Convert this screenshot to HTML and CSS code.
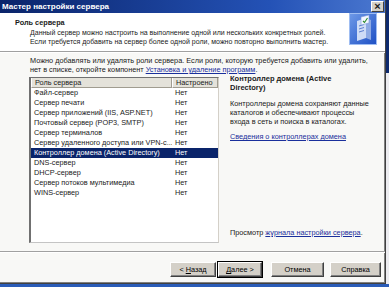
FILE: index.html
```html
<!DOCTYPE html>
<html lang="ru">
<head>
  <meta charset="UTF-8">
  <title>Мастер настройки сервера</title>
  <link rel="stylesheet" href="styles.css">
</head>
<body>
  <div class="window">
    <div class="titlebar">
      <span class="title">Мастер настройки сервера</span>
      <span class="close">×</span>
    </div>

    <!-- Wizard page header -->
    <div class="header">
      <div class="header-text">
        <p class="header-title">Роль сервера</p>
        <p class="header-sub">Данный сервер можно настроить на выполнение одной или нескольких конкретных ролей.</p>
        <p class="header-sub">Если требуется добавить на сервер более одной роли, можно повторно выполнить мастер.</p>
      </div>
      <svg class="header-icon" width="28" height="32" viewBox="0 0 28 32">
        <defs>
          <linearGradient id="bg" x1="0" y1="0" x2="1" y2="1">
            <stop offset="0" stop-color="#6f9ae8"/>
            <stop offset="1" stop-color="#1d4fc4"/>
          </linearGradient>
        </defs>
        <rect x="0" y="0" width="28" height="32" fill="url(#bg)"/>
        <rect x="0.5" y="0.5" width="27" height="31" fill="none" stroke="#9fbdf2"/>
        <path d="M8 8 L17 5 L17 25 L8 28 Z" fill="#cfdcf6"/>
        <path d="M17 5 L22 7 L22 27 L17 25 Z" fill="#8eaae4"/>
        <path d="M10 13 L15 11.5 M10 16 L15 14.5 M10 19 L15 17.5" stroke="#5d7fcf" stroke-width="1"/>
        <path d="M12 4 L20 2 L20 10 L12 12 Z" fill="#f4f7ff" stroke="#7e9ad8" stroke-width="0.6"/>
        <path d="M14 8 L15.5 9.5 L18.5 5" fill="none" stroke="#2a8a2a" stroke-width="1.1"/>
      </svg>
    </div>
    <div class="separator"></div>

    <div class="page">
      <p class="intro">Можно добавлять или удалять роли сервера. Если роли, которую требуется добавить или удалить,<br>нет в списке, откройте компонент <a href="#">Установка и удаление программ</a>.</p>

      <div class="content">
        <div class="listbox">
          <div class="list-head">
            <span class="col-name">Роль сервера</span>
            <span class="col-state">Настроено</span>
          </div>
          <div class="row"><span class="col-name">Файл-сервер</span><span class="col-state">Нет</span></div>
          <div class="row"><span class="col-name">Сервер печати</span><span class="col-state">Нет</span></div>
          <div class="row"><span class="col-name">Сервер приложений (IIS, ASP.NET)</span><span class="col-state">Нет</span></div>
          <div class="row"><span class="col-name">Почтовый сервер (POP3, SMTP)</span><span class="col-state">Нет</span></div>
          <div class="row"><span class="col-name">Сервер терминалов</span><span class="col-state">Нет</span></div>
          <div class="row"><span class="col-name">Сервер удаленного доступа или VPN-с...</span><span class="col-state">Нет</span></div>
          <div class="row selected"><span class="col-name">Контроллер домена (Active Directory)</span><span class="col-state">Нет</span></div>
          <div class="row"><span class="col-name">DNS-сервер</span><span class="col-state">Нет</span></div>
          <div class="row"><span class="col-name">DHCP-сервер</span><span class="col-state">Нет</span></div>
          <div class="row"><span class="col-name">Сервер потоков мультимедиа</span><span class="col-state">Нет</span></div>
          <div class="row"><span class="col-name">WINS-сервер</span><span class="col-state">Нет</span></div>
        </div>

        <div class="info">
          <p class="info-title">Контроллер домена (Active<br>Directory)</p>
          <p class="info-text">Контроллеры домена сохраняют данные<br>каталогов и обеспечивают процессы<br>входа в сеть и поиска в каталогах.</p>
          <p class="info-link"><a href="#">Сведения о контроллерах домена</a></p>
          <p class="info-log">Просмотр <a href="#">журнала настройки сервера</a>.</p>
        </div>
      </div>
    </div>

    <div class="separator"></div>
    <div class="buttons">
      <button class="btn btn-back" type="button">&lt; <u>Н</u>азад</button>
      <button class="btn btn-next" type="button"><u>Д</u>алее &gt;</button>
      <button class="btn btn-cancel" type="button">Отмена</button>
      <button class="btn btn-help" type="button">Справка</button>
    </div>
  </div>
  <div class="desk-side"></div>
  <div class="taskbar"></div>
</body>
</html>
```

FILE: styles.css
```css
* {
  box-sizing: border-box;
  margin: 0;
  padding: 0;
}

body {
  font-family: 'Liberation Sans', Arial, sans-serif;
  font-size: 7.3px;
  line-height: 9px;
  color: #1a1a1a;
  background: #e9e9ec;
  display: grid;
  grid-template-columns: 386px 1fr;
  grid-template-rows: 284px 1fr;
  height: 100vh;
  overflow: hidden;
}

a {
  color: #1a2f9c;
  text-decoration: underline;
}

.window {
  grid-column: 1;
  grid-row: 1;
  display: flex;
  flex-direction: column;
  background: #f8f8f6;
  border-right: 1px solid #404040;
  border-bottom: 1px solid #404040;
  box-shadow: inset -1px -1px 0 #808080;
}

.titlebar {
  height: 13px;
  display: flex;
  align-items: center;
  justify-content: space-between;
  padding: 0 1px 0 2px;
  background: linear-gradient(to right, #0a246a, #2452b6 70%, #4b78d0);
}

.title {
  color: #fff;
  font-weight: bold;
  font-size: 8px;
}

.close {
  width: 13px;
  height: 11px;
  background: #d4d0c8;
  border: 1px solid;
  border-color: #fff #404040 #404040 #fff;
  font-size: 11px;
  line-height: 8px;
  font-weight: bold;
  text-align: center;
}

.header {
  height: 38px;
  background: #fff;
  display: flex;
  justify-content: space-between;
  padding: 0 8px 0 15px;
}

.header-text {
  padding-top: 5px;
}

.header-title {
  font-weight: bold;
  margin-bottom: 0.5px;
}

.header-sub {
  padding-left: 15px;
  font-size: 7px;
  line-height: 9.5px;
}

.separator {
  border-top: 1px solid #a0a0a0;
  border-bottom: 1px solid #fff;
}

.page {
  padding: 3px 0 0 29px;
  height: 198px;
}

.intro {
  padding-left: 1px;
}

.content {
  display: flex;
  margin-top: 3px;
}

.listbox {
  width: 190px;
  height: 166px;
  background: #fff;
  border-left: 2px solid #707070;
  border-top: 1px solid #707070;
  border-right: 1px solid #d4d0c8;
  border-bottom: 1px solid #c4c4c4;
}

.list-head,
.row {
  display: flex;
  height: 10px;
  line-height: 10px;
}

.list-head {
  background: #e4e2da;
}

.list-head span {
  border-left: 1px solid #fff;
  border-right: 1px solid #a09c90;
  border-bottom: 1px solid #a09c90;
}

.col-name {
  width: 141px;
  padding-left: 3px;
  white-space: nowrap;
  overflow: hidden;
}

.col-state {
  flex: 1;
  padding-left: 3px;
}

.row.selected {
  background: #0a246a;
  color: #fff;
}

.info {
  flex: 1;
  display: flex;
  flex-direction: column;
  padding: 0 0 6px 11px;
  margin-top: -3px;
}

.info-title {
  font-weight: bold;
  font-size: 7.5px;
}

.info-text {
  margin-top: 7px;
}

.info-link {
  margin-top: 6px;
}

.info-log {
  margin-top: auto;
}

.buttons {
  display: flex;
  justify-content: flex-end;
  padding: 9px 4px 0 0;
}

.btn {
  height: 15px;
  font-family: inherit;
  font-size: 7.3px;
  color: #000;
  background: #d4d0c8;
  border: 1px solid;
  border-color: #fff #404040 #404040 #fff;
  box-shadow: inset -1px -1px 0 #808080;
}

.btn-back {
  width: 46px;
}

.btn-next {
  width: 44px;
  margin-left: 2px;
  outline: 1px solid #000;
  outline-offset: 0;
}

.btn-cancel {
  width: 53px;
  margin-left: 9px;
}

.btn-help {
  width: 51px;
  margin-left: 6px;
}

.desk-side {
  grid-column: 2;
  grid-row: 1;
  background: linear-gradient(#0e2a6e 0 73px, #ececf0 73px);
}

.taskbar {
  grid-column: 1 / -1;
  grid-row: 2;
  background: #2a5cb8;
}
```
